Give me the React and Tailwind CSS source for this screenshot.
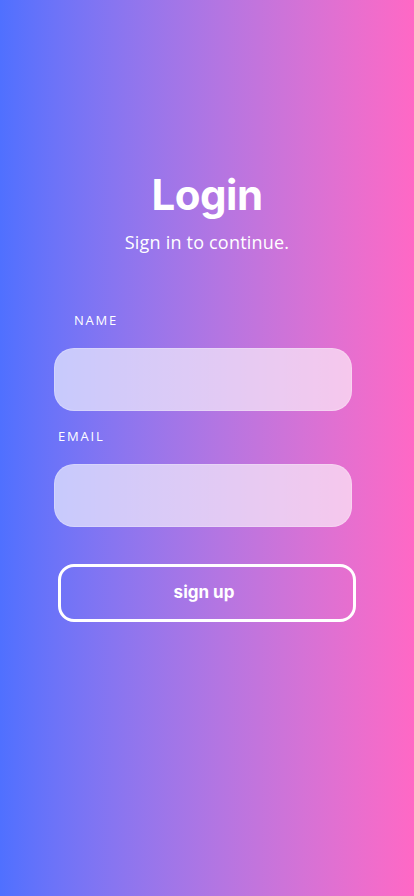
import { useState } from 'react';

const App = () => {
    const [form, setForm] = useState({ name: '', email: '' });

    const handleChange = (e) => {
        const { name, value } = e.target;
        setForm({ ...form, [name]: value });
    };

    return (
        <div className="min-h-[896px] w-full bg-gradient-to-r from-[#4f70ff] to-[#ff68c5] font-['Inter',sans-serif] text-white">
            <div className="flex flex-col pt-[170px]">

                {/* Header */}
                <h1 className="text-center text-[42px] leading-[50px] font-bold tracking-[-0.5px]">Login</h1>
                <p className="text-center text-[18px] leading-6 mt-[10px] tracking-[0.2px] font-['Open_Sans',sans-serif]">Sign in to continue.</p>

                {/* Fields */}
                <label className="ml-[74px] mt-[58px] text-[13px] leading-4 tracking-[1.8px] font-['Open_Sans',sans-serif]">NAME</label>
                <input
                    name="name"
                    value={form.name}
                    onChange={handleChange}
                    className="ml-[54px] mt-[20px] w-[298px] h-[63px] rounded-[20px] bg-white/[0.62] border border-white/20 outline-none px-5 text-gray-700"
                />

                <label className="ml-[58px] mt-[17px] text-[13px] leading-4 tracking-[1.8px] font-['Open_Sans',sans-serif]">EMAIL</label>
                <input
                    name="email"
                    value={form.email}
                    onChange={handleChange}
                    className="ml-[54px] mt-[20px] w-[298px] h-[63px] rounded-[20px] bg-white/[0.62] border border-white/20 outline-none px-5 text-gray-700"
                />

                <button className="ml-[58px] mt-[37px] w-[298px] h-[58px] rounded-[16px] border-[3px] border-white text-[17px] font-bold pr-[6px]">
                    sign up
                </button>
            </div>
        </div>
    );
};

export default App;
